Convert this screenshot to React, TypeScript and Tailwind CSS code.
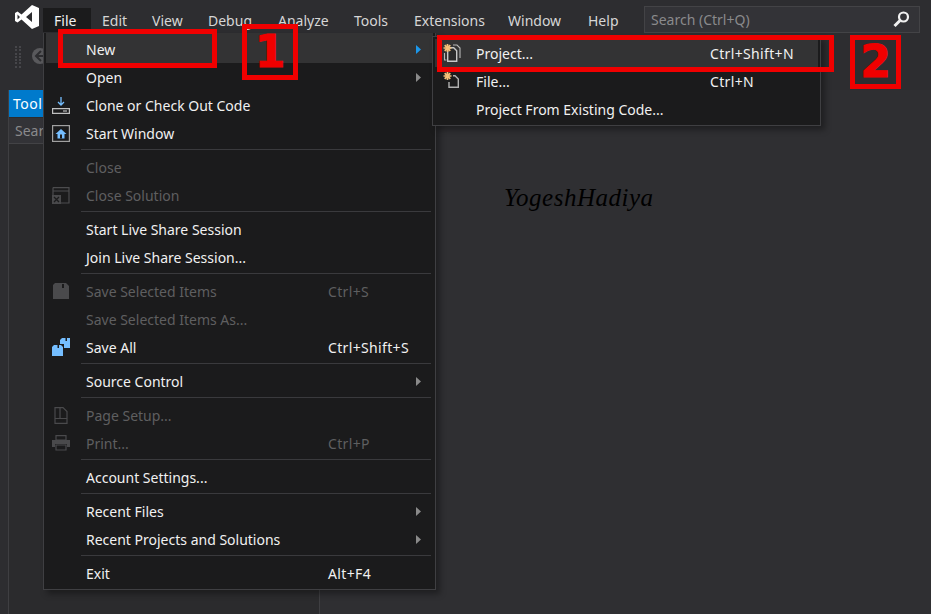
import React from 'react';

const font = { fontFamily: '"Noto Sans", "Open Sans", sans-serif' };

const topMenu = [
  { label: 'File', w: 'w-[48px]' },
  { label: 'Edit', w: 'w-[50px]' },
  { label: 'View', w: 'w-[56px]' },
  { label: 'Debug', w: 'w-[70px]' },
  { label: 'Analyze', w: 'w-[76px]' },
  { label: 'Tools', w: 'w-[60px]' },
  { label: 'Extensions', w: 'w-[94px]' },
  { label: 'Window', w: 'w-[80px]' },
  { label: 'Help', w: 'w-[56px]' },
];

const CloneIcon = () => (
  <svg width="18" height="17" viewBox="0 0 18 17">
    <path d="M9 0v8M6 5l3 3 3-3" stroke="#75beff" strokeWidth="1.3" fill="none" />
    <path d="M.6 11.600h16.800v4.800H.6z" stroke="#c0c0c0" strokeWidth="1.2" fill="none" />
    <path d="M11 14h4" stroke="#c0c0c0" strokeWidth="1.200" />
  </svg>
);

const StartIcon = () => (
  <svg width="18" height="17" viewBox="0 0 18 17">
    <rect x="0.6" y="0.6" width="16.8" height="15.8" fill="#1b1b1c" stroke="#a0a0a0" strokeWidth="1.2" />
    <path d="M3.500 9l5.500-5 5.500 5h-2v4.500h-7V9z" fill="#75beff" />
    <rect x="8" y="9.500" width="2" height="4" fill="#1b1b1c" />
  </svg>
);

const CloseSolutionIcon = () => (
  <svg width="18" height="17" viewBox="0 0 18 17">
    <path d="M1 0.6h16V16H8M1 0.6V9M1 4h16" stroke="#4c4c4e" strokeWidth="1.2" fill="none" />
    <rect x="0" y="8" width="9" height="9" fill="#49494b" />
    <path d="M2 10l5 5M7 10l-5 5" stroke="#1b1b1c" strokeWidth="1.3" />
  </svg>
);

const SaveIcon = () => (
  <svg width="16" height="16" viewBox="0 0 16 16">
    <path d="M2 0h11l3 3v13H0V2z" fill="#4a4a4c" />
    <rect x="9" y="1" width="2" height="4" fill="#1b1b1c" />
  </svg>
);

const SaveAllIcon = () => (
  <svg width="18" height="18" viewBox="0 0 18 18">
    <path d="M10 0h8v10h-6V6H8V2z" fill="#75beff" />
    <rect x="13.500" y="0" width="1.500" height="3" fill="#1b1b1c" />
    <path d="M2 7h7l2 2v9H0V9z" fill="#75beff" />
    <rect x="5.500" y="7" width="1.500" height="3" fill="#1b1b1c" />
  </svg>
);

const PageSetupIcon = () => (
  <svg width="14" height="17" viewBox="0 0 14 17">
    <path d="M1 .6h8l4 4V16.400H1zM6 .6v11M1 11.500h12" stroke="#4a4a4c" strokeWidth="1.2" fill="none" />
  </svg>
);

const PrintIcon = () => (
  <svg width="18" height="16" viewBox="0 0 18 16">
    <path d="M4 .6h10V5H4z" stroke="#4a4a4c" strokeWidth="1.2" fill="none" />
    <path d="M0 5h18v7h-3V9H3v3H0z" fill="#4a4a4c" />
    <path d="M4 10h10v5H4z" stroke="#4a4a4c" strokeWidth="1.2" fill="none" />
  </svg>
);

const Star = () => (
  <g stroke="#f4c078" strokeWidth="1.7">
    <path d="M4.500 1v8M.5 5h8M1.700 2.200l5.600 5.600M7.300 2.200l-5.600 5.600" />
  </g>
);

const NewProjectIcon = () => (
  <svg width="18" height="20" viewBox="0 0 18 20">
    <path d="M10 2h4l3 3v10" stroke="#b8b8b8" strokeWidth="1.1" fill="none" />
    <path d="M1.500 10v7h2" stroke="#b8b8b8" strokeWidth="1.1" fill="none" />
    <path d="M4.700 4.700h6l3 3v10.600h-9z" fill="#2a2a2b" stroke="#c8c8c8" strokeWidth="1.4" />
    <Star />
  </svg>
);

const NewFileIcon = () => (
  <svg width="18" height="20" viewBox="0 0 18 20">
    <path d="M10 4.700h2l3.300 3.300v8.300H6V11" fill="none" stroke="#b0b0b0" strokeWidth="1.4" />
    <Star />
  </svg>
);

type Item = {
  label: string;
  icon?: React.ReactNode;
  shortcut?: string;
  arrow?: boolean;
  disabled?: boolean;
  active?: boolean;
};

const groups: Item[][] = [
  [
    { label: 'New', arrow: true, active: true },
    { label: 'Open', arrow: true },
    { label: 'Clone or Check Out Code', icon: <CloneIcon /> },
    { label: 'Start Window', icon: <StartIcon /> },
  ],
  [
    { label: 'Close', disabled: true },
    { label: 'Close Solution', disabled: true, icon: <CloseSolutionIcon /> },
  ],
  [{ label: 'Start Live Share Session' }, { label: 'Join Live Share Session...' }],
  [
    { label: 'Save Selected Items', disabled: true, shortcut: 'Ctrl+S', icon: <SaveIcon /> },
    { label: 'Save Selected Items As...', disabled: true },
    { label: 'Save All', shortcut: 'Ctrl+Shift+S', icon: <SaveAllIcon /> },
  ],
  [{ label: 'Source Control', arrow: true }],
  [
    { label: 'Page Setup...', disabled: true, icon: <PageSetupIcon /> },
    { label: 'Print...', disabled: true, shortcut: 'Ctrl+P', icon: <PrintIcon /> },
  ],
  [{ label: 'Account Settings...' }],
  [
    { label: 'Recent Files', arrow: true },
    { label: 'Recent Projects and Solutions', arrow: true },
  ],
  [{ label: 'Exit', shortcut: 'Alt+F4' }],
];

const Arrow = ({ active }: { active?: boolean }) => (
  <svg width="5" height="9" viewBox="0 0 5 9" className="absolute bottom-[9px] right-[12px]">
    <path d="M0 0l5 4.500L0 9z" fill={active ? '#1c97ea' : '#8a8a8a'} />
  </svg>
);

const FileMenuRow = ({ item }: { item: Item }) => (
  <div
    className={`relative flex items-center ${item.active ? 'h-[30px] bg-[#333334] pt-[2px]' : 'h-[28px]'} ${
      item.disabled ? 'text-[#5f5f60]' : 'text-[#f1f1f1]'
    }`}
  >
    <div className="ml-[6px] mr-[16px] flex w-[18px] shrink-0 items-center justify-center">{item.icon}</div>
    <span className="w-[242px] shrink-0">{item.label}</span>
    {item.shortcut && <span className="tracking-[0.35px]">{item.shortcut}</span>}
    {item.arrow && <Arrow active={item.active} />}
  </div>
);

const subItems = [
  { label: 'Project...', shortcut: 'Ctrl+Shift+N', icon: <NewProjectIcon />, active: true },
  { label: 'File...', shortcut: 'Ctrl+N', icon: <NewFileIcon /> },
  { label: 'Project From Existing Code...' },
];

export default function App() {
  return (
    <div className="relative h-[614px] w-[931px] overflow-hidden bg-[#2d2d30] text-[14px]" style={font}>
      {/* title bar */}
      <div className="flex h-[33px] items-end">
        <div className="flex h-[33px] w-[43px] shrink-0 items-center pl-[15px]">
          <svg width="24" height="24" viewBox="0 0 24 24">
            <path
              d="M17 0l7 3v18l-7 3-10.500-9.500-4 3L0 16V8l2.500-1.500 4 3zM17 7l-6 5 6 5zM2.500 9.500v5L5 12z"
              fill="#ffffff"
              fillRule="evenodd"
            />
          </svg>
        </div>
        <nav className="flex h-[24px] w-[601px] shrink-0 items-center pb-[2px] text-[#d6d6d6]">
          {topMenu.map((m, i) => (
            <div
              key={m.label}
              className={`flex h-[24px] items-center pl-[11px] ${m.w} ${i === 0 ? 'bg-[#1b1b1c] text-[#f1f1f1]' : ''}`}
            >
              {m.label}
            </div>
          ))}
        </nav>
        <div className="flex h-[27px] w-[276px] shrink-0 items-center justify-between border border-[#434346] bg-[#333337] pl-[6px] pr-[9px] text-[#8a8a8c]">
          <span>Search (Ctrl+Q)</span>
          <svg width="17" height="17" viewBox="0 0 17 17">
            <circle cx="10.500" cy="6" r="4.500" fill="none" stroke="#f1f1f1" strokeWidth="2.2" />
            <path d="M7 9.500L1.500 15" stroke="#f1f1f1" strokeWidth="3" />
          </svg>
        </div>
      </div>

      {/* toolbar */}
      <div className="flex h-[57px] items-start gap-[10px] pl-[15px] pt-[13px]">
        <div className="grid h-[22px] w-[6px] grid-cols-2 gap-[1px]">
          {Array.from({ length: 14 }).map((_, i) => (
            <div key={i} className="h-[2px] w-[2px] bg-[#46464a]" />
          ))}
        </div>
        <svg width="18" height="18" viewBox="0 0 18 18" className="mt-[1px]">
          <circle cx="9" cy="9" r="8" fill="#59595c" />
          <path d="M10 4L5 9l5 5M5.500 9H14" stroke="#2d2d30" strokeWidth="2" fill="none" />
        </svg>
      </div>

      {/* tool window + document area */}
      <div className="flex h-[524px] pl-[8px]">
        <div className="flex w-[312px] flex-col border-x border-[#3f3f42] bg-[#2b2b2d]">
          <div className="flex h-[27px] w-[34px] items-center overflow-hidden whitespace-nowrap bg-[#007acc] pl-[4px] tracking-[0.5px] text-white">
            Toolbox
          </div>
          <div className="mt-[1px] flex h-[26px] items-center border-b border-[#434346] bg-[#333337] pl-[6px] text-[#8a8a8c]">
            <span className="w-[28px] overflow-hidden whitespace-nowrap">Search Toolbox</span>
          </div>
        </div>
        <div className="flex-1 bg-[#2f2f32] pl-[184px] pt-[93px]">
          <span
            className="text-[25px] italic leading-[30px] tracking-[0.5px] text-black"
            style={{ fontFamily: '"Liberation Serif", serif' }}
          >
            YogeshHadiya
          </span>
        </div>
      </div>

      {/* File menu */}
      <div className="absolute left-[43px] top-[33px] w-[393px] border border-t-0 border-[#3f3f42] bg-[#1b1b1c] pb-[2px] pl-[2px] pr-[2px] shadow-[4px_4px_6px_rgba(0,0,0,0.35)]">
        {groups.map((group, i) => (
          <div key={i}>
            {i > 0 && (
              <div className="flex h-[6px] items-start pl-[35px] pr-[2px] pt-[2px]">
                <div className="h-px w-full bg-[#3a3a3d]" />
              </div>
            )}
            {group.map((item) => (
              <FileMenuRow key={item.label} item={item} />
            ))}
          </div>
        ))}
      </div>

      {/* New submenu */}
      <div className="absolute left-[432px] top-[36px] w-[389px] border border-[#3f3f42] bg-[#1b1b1c] pb-[2px] pl-[2px] pr-[2px] pt-[2px] text-[#f1f1f1] shadow-[4px_4px_6px_rgba(0,0,0,0.35)]">
        {subItems.map((s) => (
          <div key={s.label} className={`flex h-[28px] items-center ${s.active ? 'bg-[#333334]' : ''}`}>
            <div className="flex w-[41px] shrink-0 items-center justify-start pl-[8px]">{s.icon}</div>
            <span className="w-[234px] shrink-0">{s.label}</span>
            {s.shortcut && <span className="tracking-[0.35px]">{s.shortcut}</span>}
          </div>
        ))}
      </div>

      {/* red annotations */}
      <div className="absolute left-[58px] top-[29px] h-[39px] w-[159px] border-[5px] border-[#f00000]" />
      <div className="absolute left-[437px] top-[35px] h-[37px] w-[397px] border-[5px] border-[#f00000]" />
      <div
        className="absolute left-[242px] top-[24px] flex h-[56px] w-[56px] items-center justify-center border-[5px] border-[#f00000] text-[44px] font-bold text-[#f00000] [-webkit-text-stroke:1px_#f00000]"
        style={{ fontFamily: '"DejaVu Sans", sans-serif' }}
      >
        1
      </div>
      <div
        className="absolute left-[850px] top-[35px] flex h-[54px] w-[51px] items-center justify-center border-[5px] border-[#f00000] text-[44px] font-bold text-[#f00000] [-webkit-text-stroke:1px_#f00000]"
        style={{ fontFamily: '"DejaVu Sans", sans-serif' }}
      >
        2
      </div>
    </div>
  );
}
